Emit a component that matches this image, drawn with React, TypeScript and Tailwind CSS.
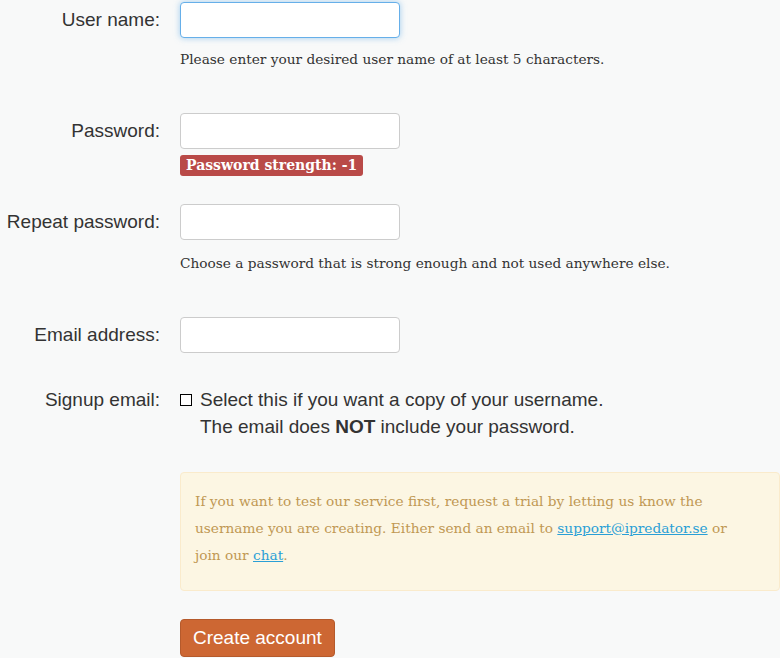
const sans = "font-['Liberation_Sans',Arial,sans-serif]";
const serif = "font-['DejaVu_Serif',Georgia,serif]";

const inputBase =
  "block h-9 w-[220px] rounded-[4px] border bg-white px-3 outline-none";

export default function App() {
  return (
    <div className={`min-h-screen bg-[#f8f9f9] text-[#333] ${sans}`}>
      <form className="grid grid-cols-[160px_1fr] gap-x-5 pt-[2px]">
        {/* user name */}
        <label className="flex h-9 items-center justify-end text-[19px]">
          User name:
        </label>
        <div>
          <input
            className={`${inputBase} border-[#66afe9] shadow-[0_0_6px_rgba(102,175,233,0.6)]`}
          />
          <p className={`mt-[11px] text-[13.7px] leading-5 ${serif}`}>
            Please enter your desired user name of at least 5 characters.
          </p>
        </div>

        {/* password */}
        <label className="mt-[44px] flex h-9 items-center justify-end text-[19px]">
          Password:
        </label>
        <div className="mt-[44px]">
          <input type="password" className={`${inputBase} border-[#ccc]`} />
          <div
            className={`mt-[6px] w-fit rounded-[3px] bg-[#b94a48] px-[6px] text-[14px] leading-[21px] font-bold text-white ${serif}`}
          >
            Password strength: -1
          </div>
        </div>

        {/* repeat */}
        <label className="mt-[28px] flex h-9 items-center justify-end text-[19px]">
          Repeat password:
        </label>
        <div className="mt-[28px]">
          <input type="password" className={`${inputBase} border-[#ccc]`} />
          <p className={`mt-[13px] text-[13.7px] leading-5 ${serif}`}>
            Choose a password that is strong enough and not used anywhere else.
          </p>
        </div>

        {/* email */}
        <label className="mt-[44px] flex h-9 items-center justify-end text-[19px]">
          Email address:
        </label>
        <div className="mt-[44px]">
          <input type="email" className={`${inputBase} border-[#ccc]`} />
        </div>

        {/* signup email */}
        <label className="mt-[33px] text-right text-[19px] leading-[27px]">
          Signup email:
        </label>
        <div className="mt-[33px] text-[19px] leading-[27px]">
          <div className="flex items-center">
            <span className="mr-2 inline-block h-3 w-3 border border-black bg-white" />
            Select this if you want a copy of your username.
          </div>
          <div className="pl-5">
            The email does <b>NOT</b> include your password.
          </div>
        </div>

        {/* trial notice */}
        <div />
        <div
          className={`mt-[32px] rounded-[4px] border border-[#faebcc] bg-[#fcf6e3] pl-[14px] pr-[30px] pt-[15px] pb-[21px] text-[13.7px] leading-[27px] text-[#c09853] ${serif}`}
        >
          If you want to test our service first, request a trial by letting us
          know the username you are creating. Either send an email to{" "}
          <a href="#" className="text-[#2a9fd6] underline">
            support@ipredator.se
          </a>{" "}
          or join our{" "}
          <a href="#" className="text-[#2a9fd6] underline">
            chat
          </a>
          .
        </div>

        <div />
        <div className="mt-[28px]">
          <button
            type="button"
            className="h-[38px] rounded-[4px] border border-[#b55a2c] bg-[#cd6733] px-3 text-[19px] text-white"
          >
            Create account
          </button>
        </div>
      </form>
    </div>
  );
}
